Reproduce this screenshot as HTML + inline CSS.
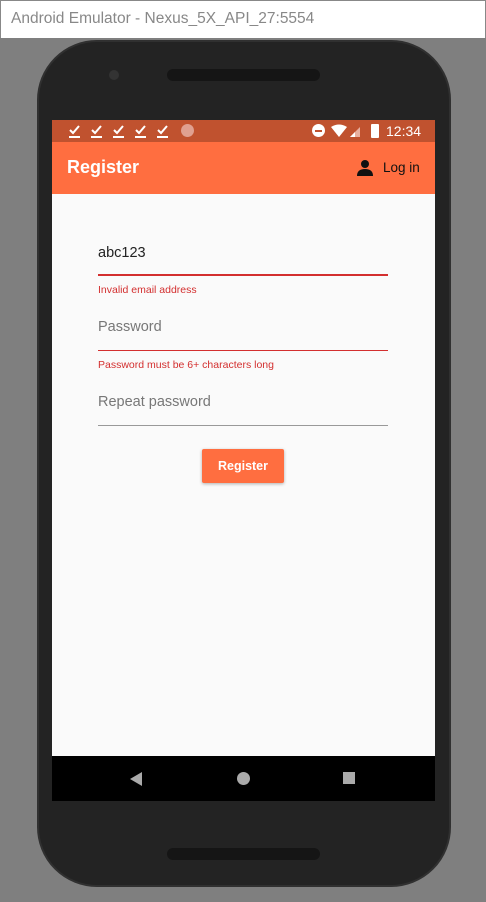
<!DOCTYPE html><html><head><style>
*{margin:0;padding:0;box-sizing:border-box}
body{width:486px;height:902px;background:#7f7f7f;position:relative;overflow:hidden;font-family:"Liberation Sans",sans-serif}
.tb{position:absolute;left:0;top:0;width:486px;height:38px;background:#fff;border:1px solid #888;border-bottom:none}
.tb span{position:absolute;left:10px;top:9px;font-size:15.5px;color:#888}
.ph{position:absolute;left:37px;top:40px;width:414px;height:847px;background:#232323;border-radius:60px;border:2px solid #303030}
.spk{position:absolute;left:128px;width:153px;height:12px;border-radius:6px;background:#151515}
.scr{position:absolute;left:52px;top:120px;width:383px;height:681px;background:#fafafa}
.sb{position:absolute;left:0;top:0;width:383px;height:22px;background:#c0522f}
.ab{position:absolute;left:0;top:22px;width:383px;height:52px;background:#ff6e40;color:#fff}
.nav{position:absolute;left:0;top:636px;width:383px;height:45px;background:#000}
.f{position:absolute;left:46px;width:290px;font-size:14.5px}
.lbl{color:#777}
.err{position:absolute;left:46px;font-size:10.5px;color:#d32f2f}
.ln{position:absolute;left:46px;width:290px}
</style></head><body>
<div class="tb"><span>Android Emulator - Nexus_5X_API_27:5554</span></div>
<div class="ph">
<div style="position:absolute;left:70px;top:28px;width:10px;height:10px;border-radius:50%;background:#333"></div>
<div class="spk" style="top:27px"></div>
<div class="spk" style="top:806px"></div>
</div>
<div class="scr">
<div class="sb">
<svg style="position:absolute;left:17px;top:4px" width="110" height="14" fill="none" stroke="#fff" stroke-width="2"><g id="c"><path d="M1 6 L4 9 L10 2"/><path d="M0 13 H11"/></g><use href="#c" x="22"/><use href="#c" x="44"/><use href="#c" x="66"/><use href="#c" x="88"/></svg>
<div style="position:absolute;left:129px;top:4px;width:13px;height:13px;border-radius:50%;background:#e0a090"></div>
<div style="position:absolute;left:260px;top:4px;width:13px;height:13px;border-radius:50%;background:#fff"><div style="position:absolute;left:3px;top:5.5px;width:7px;height:2px;background:#c0522f"></div></div>
<svg style="position:absolute;left:279px;top:4px" width="34" height="14"><path d="M0 3 Q8 -2 16 3 L8 13Z" fill="#fff"/><path d="M19 13 L29 3 L29 13Z" fill="#e8b0a0"/><path d="M19 13 L24 8 L24 13Z" fill="#fff"/></svg>
<div style="position:absolute;left:319px;top:4px;width:8px;height:14px;background:#fff;border-radius:1px"></div>
<div style="position:absolute;left:334px;top:3px;color:#fff;font-size:14px">12:34</div>
</div>
<div class="ab">
<div style="position:absolute;left:15px;top:15px;font-size:18px;font-weight:bold">Register</div>
<svg style="position:absolute;left:304px;top:17px" width="18" height="18"><circle cx="9" cy="5" r="4" fill="#111"/><path d="M1 17 Q1 10 9 10 Q17 10 17 17Z" fill="#111"/></svg>
<div style="position:absolute;left:331px;top:18px;font-size:13.5px;color:#111">Log in</div>
</div>
<div class="f" style="top:125px;color:#222">abc123</div>
<div class="ln" style="top:154px;height:2px;background:#d32f2f"></div>
<div class="err" style="top:164px">Invalid email address</div>
<div class="f lbl" style="top:199px">Password</div>
<div class="ln" style="top:230px;height:1px;background:#d32f2f"></div>
<div class="err" style="top:239px">Password must be 6+ characters long</div>
<div class="f lbl" style="top:274px">Repeat password</div>
<div class="ln" style="top:305px;height:1px;background:#999"></div>
<div style="position:absolute;left:150px;top:329px;width:82px;height:34px;background:#ff6e40;color:#fff;font-size:12.5px;font-weight:bold;text-align:center;line-height:34px;border-radius:2px;box-shadow:0 1px 3px rgba(0,0,0,.3)">Register</div>
<div class="nav">
<svg style="position:absolute;left:78px;top:16px" width="12" height="14"><path d="M0 7 L12 0 L12 14Z" fill="#aaa"/></svg>
<div style="position:absolute;left:185px;top:16px;width:13px;height:13px;border-radius:50%;background:#aaa"></div>
<div style="position:absolute;left:291px;top:16px;width:12px;height:12px;background:#aaa"></div>
</div>
</div>
</body></html>
